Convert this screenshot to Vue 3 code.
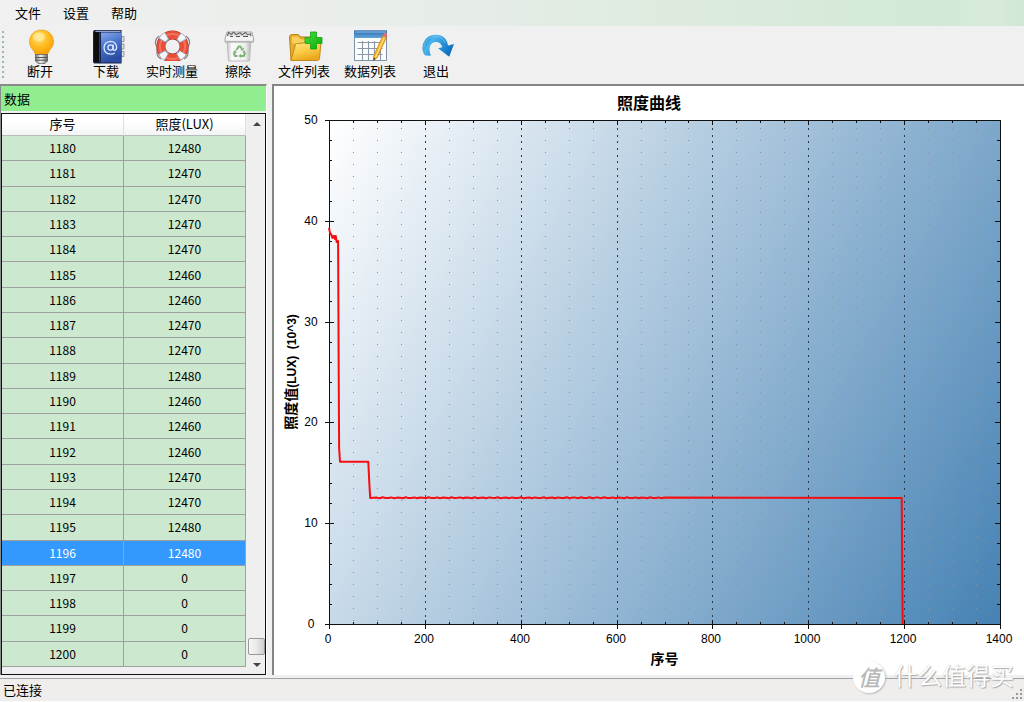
<script setup>
import { computed, onBeforeUnmount, onMounted, ref } from 'vue'

const menus = ['文件', '设置', '帮助']

const tools = [
  { id: 'bulb', label: '断开' },
  { id: 'book', label: '下载' },
  { id: 'ring', label: '实时测量' },
  { id: 'bin', label: '擦除' },
  { id: 'folder', label: '文件列表' },
  { id: 'sheet', label: '数据列表' },
  { id: 'exit', label: '退出' },
]

const lux = [
  12480, 12470, 12470, 12470, 12470, 12460, 12460, 12470, 12470, 12480, 12460,
  12460, 12460, 12470, 12470, 12480, 12480, 0, 0, 0, 0,
]
const rows = lux.map((value, i) => ({ no: 1180 + i, value }))
const selected = ref(1196)

/* chart geometry follows the size of its pane */
const pane = ref(null)
const width = ref(750)
const height = ref(589)
let observer

onMounted(() => {
  const measure = () => {
    width.value = Math.max(200, pane.value.clientWidth)
    height.value = Math.max(200, pane.value.clientHeight)
  }
  measure()
  observer = new ResizeObserver(measure)
  observer.observe(pane.value)
})
onBeforeUnmount(() => observer && observer.disconnect())

const X_MAX = 1400
const Y_MAX = 50
const left = 55
const top = 34
const right = computed(() => width.value - 24)
const bottom = computed(() => height.value - 51)
const plotW = computed(() => right.value - left)
const plotH = computed(() => bottom.value - top)

const px = (v) => left + (v / X_MAX) * plotW.value
const py = (v) => bottom.value - (v / Y_MAX) * plotH.value

const xTicks = computed(() =>
  Array.from({ length: 29 }, (_, i) => i * 50).map((v) => ({
    v,
    major: v % 200 === 0,
    pos: Math.round(px(v)),
  }))
)
const yTicks = computed(() =>
  Array.from({ length: 26 }, (_, i) => i * 2).map((v) => ({
    v,
    major: v % 10 === 0,
    pos: Math.round(py(v)),
  }))
)
const inner = computed(() => xTicks.value.filter((t) => t.v > 0 && t.v < X_MAX))

const shade = computed(() => {
  const gx = 0.7 / plotW.value
  const gy = 0.3 / plotH.value
  const n = gx * gx + gy * gy
  return { x: left + gx / n, y: top + gy / n }
})

const series = [
  [0, 39.3], [2, 38.8], [5, 38.6], [7, 38.3], [10, 38.5], [12, 38.2],
  [14, 38.5], [16, 37.9], [19, 38], [20, 27], [21, 17.5], [23, 16.1],
  [82, 16.1], [84, 14], [86, 12.5],
]
for (let v = 100; v <= 700; v += 6) {
  series.push([v, 12.52 + 0.05 * Math.sin(v * 1.7)])
}
series.push([1195, 12.5], [1196, 6], [1197, 0])
const line = computed(() =>
  series.map(([a, b]) => `${px(a).toFixed(1)},${py(b).toFixed(1)}`).join(' ')
)
</script>

<template>
  <div class="window">
    <nav class="menu">
      <button v-for="m in menus" :key="m" type="button">{{ m }}</button>
    </nav>

    <div class="toolbar">
      <span class="grip"></span>
      <button v-for="t in tools" :key="t.id" type="button" class="tool">
        <svg v-if="t.id === 'bulb'" viewBox="0 0 34 34" aria-hidden="true">
          <defs>
            <radialGradient id="bulbFill" cx=".4" cy=".3" r=".75">
              <stop offset="0" stop-color="#ffe27a" />
              <stop offset=".5" stop-color="#ffbd22" />
              <stop offset="1" stop-color="#f79a00" />
            </radialGradient>
            <linearGradient id="capFill">
              <stop offset="0" stop-color="#777" />
              <stop offset=".45" stop-color="#f4f4f4" />
              <stop offset="1" stop-color="#666" />
            </linearGradient>
          </defs>
          <path d="M18.500 0C11 0 6.500 5.500 6.500 11.800c0 4.600 2.600 6.700 4.200 9.200 1 1.600 1.300 3 2 3.800h11.500c.8-1 1-2.300 2-3.900 1.600-2.500 4.300-4.500 4.300-9.100C30.500 5.500 26 0 18.500 0z" fill="url(#bulbFill)" stroke="#ee9a10" stroke-width=".7" />
          <ellipse cx="16" cy="7" rx="6" ry="4.500" fill="#fff3b8" opacity=".55" />
          <path d="M12.500 24.500h12v6.500l-2.500 2.500h-7l-2.500-2.500z" fill="url(#capFill)" stroke="#555" stroke-width=".7" />
          <path d="M12.500 27.500h12M12.500 30.200h12" stroke="#555" stroke-width="1" />
        </svg>

        <svg v-else-if="t.id === 'book'" viewBox="0 0 34 34" aria-hidden="true">
          <defs>
            <linearGradient id="bookFill" x2=".3" y2="1">
              <stop offset="0" stop-color="#86a9e8" />
              <stop offset=".45" stop-color="#4a76cc" />
              <stop offset="1" stop-color="#2a4ca2" />
            </linearGradient>
          </defs>
          <path d="M32 6.500h3v5h-3zM32 14h3v5h-3zM32 21.500h3v5h-3z" fill="#ddd" stroke="#888" stroke-width=".8" />
          <path d="M5.500 0h27v33.500h-27q-1.500 0-1.500-2v-29Q4 0 5.500 0z" fill="#16244a" />
          <path d="M12 2.500h20.500v30H12z" fill="url(#bookFill)" />
          <path d="M5 1.500l6 1.500v29.500l-6-1z" fill="#0b0c12" />
          <path d="M10.500 3v29" stroke="#3d414d" stroke-width="1" />
          <path d="M6.500 1.300h25" stroke="#b4c2e2" stroke-width="1" />
          <circle cx="21.500" cy="17.500" r="2.600" fill="none" stroke="#dce8ff" stroke-width="1.300" />
          <path d="M24.200 14.600v4.400q.3 1.800 1.700 1.300 2-1 1.700-3.800-.9-5-6.100-5.200-6.200.5-6.500 6.400.3 6 6.500 6.400 2.700 0 4.200-1.200" fill="none" stroke="#dce8ff" stroke-width="1.300" />
        </svg>

        <svg v-else-if="t.id === 'ring'" viewBox="0 0 34 34" aria-hidden="true">
          <path d="M4 6Q-1 10 1 15q2 2 1 5-1 6 4 9M31 6q5 4 3 9-2 2-1 5 1 6-4 9" fill="none" stroke="#7b8792" stroke-width="1.200" />
          <clipPath id="ringClip"><path d="M0 0h34v31H0z" /></clipPath>
          <g clip-path="url(#ringClip)">
            <circle cx="17.500" cy="16.500" r="11.600" fill="none" stroke="#b33423" stroke-width="9" />
            <circle cx="17.500" cy="16.500" r="11.600" fill="none" stroke="#e8503a" stroke-width="7.800" />
            <circle cx="17.500" cy="16.500" r="12.600" fill="none" stroke="#ff8a70" stroke-width="2" opacity=".6" />
            <circle cx="17.500" cy="16.500" r="11.600" fill="none" stroke="#8db6dc" stroke-width="8.200" stroke-dasharray="6.400 11.820" stroke-dashoffset="-5.900" />
            <circle cx="17.500" cy="16.500" r="12.300" fill="none" stroke="#f4f8fc" stroke-width="6.800" stroke-dasharray="5.400 13.920" stroke-dashoffset="-6.900" />
          </g>
        </svg>

        <svg v-else-if="t.id === 'bin'" viewBox="0 0 34 34" aria-hidden="true">
          <defs>
            <linearGradient id="binFill">
              <stop offset="0" stop-color="#c4c4c4" />
              <stop offset=".2" stop-color="#fafafa" />
              <stop offset=".75" stop-color="#efefef" />
              <stop offset="1" stop-color="#b5b5b5" />
            </linearGradient>
          </defs>
          <path d="M6 11h24l-1.500 20h-21z" fill="url(#binFill)" stroke="#bdbdbd" />
          <path d="M6 2h25l1.500 7v3H4V9z" fill="#f4f4f4" stroke="#a5a5a5" />
          <path d="M6.500 6l1-3.500 3 2 2-2.500 2.500 2.500 4-1.800 2 2 3.500-2.200 2 2.200 3-1 .5 2.500" fill="#ddd" stroke="#666" stroke-width="1.100" />
          <path d="M9 6.500h3m3 0h4m3 0h5" stroke="#555" stroke-width="1.100" />
          <path d="M4.500 11.500h28" stroke="#b5b5b5" stroke-width="1.300" />
          <g fill="none" stroke="#7fb277" stroke-width="2">
            <path d="M15.400 20l2.400-3.500h1.500l1.600 2.500" />
            <path d="M22.600 21l1.300 2.700-1.200 2.200h-3.400" />
            <path d="M16.500 26h-2.400L13 23.700l1.200-2.200" />
          </g>
          <path d="M22.700 17.200v3.400h-3.400zM20 23.700v4.400l-2.500-2.200zM11.900 21.300l3.100-1.100.6 3.200z" fill="#7fb277" />
        </svg>

        <svg v-else-if="t.id === 'folder'" viewBox="0 0 34 34" aria-hidden="true">
          <defs>
            <linearGradient id="folderFill" x2=".4" y2="1">
              <stop offset="0" stop-color="#ffe98a" />
              <stop offset=".6" stop-color="#fbcb45" />
              <stop offset="1" stop-color="#eba81e" />
            </linearGradient>
            <linearGradient id="plusFill" x2="1" y2="1">
              <stop offset="0" stop-color="#46e03a" />
              <stop offset="1" stop-color="#0aa80d" />
            </linearGradient>
          </defs>
          <path d="M4 30.500L2.500 7Q2.500 4.500 5 4.500h6l3 2.500h16v5l-2 18.500z" fill="#e8ab2a" stroke="#bd831c" />
          <path d="M5 6.500h6l3 3h14v4H5z" fill="#f7cf5c" />
          <path d="M4 30.500l4.500-16q.5-1 2-1l6-.5 2-2H33q1.300 0 1 1.500l-1.500 16q-.5 2-2 2z" fill="url(#folderFill)" stroke="#c08a1d" />
          <path d="M23.500 2h6v5.500H35v6h-5.500V19h-6v-5.500H18v-6h5.500z" fill="url(#plusFill)" stroke="#14a314" stroke-width=".8" />
        </svg>

        <svg v-else-if="t.id === 'sheet'" viewBox="0 0 34 34" aria-hidden="true">
          <defs>
            <linearGradient id="barFill" x2="0" y2="1">
              <stop offset="0" stop-color="#2d69a8" />
              <stop offset="1" stop-color="#5fa5dd" />
            </linearGradient>
          </defs>
          <path d="M1.500 1h32v29.500h-32z" fill="#fdfdfd" stroke="#7b91a8" />
          <path d="M1 .5h33v7.500H1z" fill="url(#barFill)" />
          <path d="M2 2h31" stroke="#8cc0ea" stroke-width="1" />
          <path d="M4.500 12.500h25M4.500 18.500h25M4.500 24.500h25M9.500 11v19M15.500 11v19M21.500 11v19M27.500 11v19" stroke="#8b98a6" stroke-width="1.100" />
          <path d="M20.300 30.500l.4-4.400L30.200 5l3.600 1.700-9.600 21z" fill="#fbb92a" stroke="#b97b17" stroke-width=".7" />
          <path d="M22.600 27L32 6" stroke="#ffe48b" stroke-width="1" />
          <path d="M29.500 6.500l1.300-3q1.700-1.700 3.200.4l-.7 4z" fill="#e86a6a" />
          <path d="M20.300 31l.5-3.500 1.900 1.200z" fill="#55442d" />
        </svg>

        <svg v-else viewBox="0 0 34 34" aria-hidden="true">
          <defs>
            <linearGradient id="exitFill" x2="1" y2=".5">
              <stop offset="0" stop-color="#1b78bd" />
              <stop offset=".35" stop-color="#4ab5ee" />
              <stop offset="1" stop-color="#0f71c0" />
            </linearGradient>
          </defs>
          <path d="M6.500 25.500C1 22 2.500 4.800 17 4.800c7 0 11 4.200 12 10.700l6-1.500-4.800 12.700L19 18.300l4.300-1.100C22.300 13.800 20 12 17 12c-5.500 0-8.500 6-5 13.800z" fill="url(#exitFill)" />
          <path d="M4.800 17C6 9.500 11 6.300 16.500 6.300q7 .2 10 6.500" fill="none" stroke="#8bd5fa" stroke-width="1" opacity=".6" />
        </svg>
        <span>{{ t.label }}</span>
      </button>
    </div>

    <main class="body">
      <section class="data">
        <h2>数据</h2>
        <div class="grid">
          <div class="records">
            <table>
              <thead>
                <tr><th scope="col">序号</th><th scope="col">照度(LUX)</th></tr>
              </thead>
              <tbody>
                <tr
                  v-for="r in rows"
                  :key="r.no"
                  :class="{ on: r.no === selected }"
                  @click="selected = r.no"
                >
                  <td>{{ r.no }}</td>
                  <td>{{ r.value }}</td>
                </tr>
              </tbody>
            </table>
          </div>
          <div class="scroll">
            <button type="button" aria-label="向上滚动">
              <svg viewBox="0 0 8 4" aria-hidden="true"><path d="M0 4l4-4 4 4z" /></svg>
            </button>
            <span class="thumb"></span>
            <button type="button" aria-label="向下滚动">
              <svg viewBox="0 0 8 4" aria-hidden="true"><path d="M0 0l4 4 4-4z" /></svg>
            </button>
          </div>
        </div>
      </section>

      <section ref="pane" class="chart">
        <svg :viewBox="`0 0 ${width} ${height}`" role="img" aria-label="照度曲线">
          <defs>
            <linearGradient
              id="plotFill"
              gradientUnits="userSpaceOnUse"
              :x1="left"
              :y1="top"
              :x2="shade.x"
              :y2="shade.y"
            >
              <stop offset="0" stop-color="#ffffff" />
              <stop offset="1" stop-color="#4682b4" />
            </linearGradient>
          </defs>
          <text class="title" :x="width / 2" y="23">照度曲线</text>
          <rect :x="left" :y="top" :width="plotW" :height="plotH" fill="url(#plotFill)" />

          <g class="crisp">
            <line
              v-for="t in inner"
              :key="'g' + t.v"
              :class="t.major ? 'major' : 'minor'"
              :x1="t.pos"
              :x2="t.pos"
              :y1="top + 8"
              :y2="bottom"
            />
            <template v-for="t in xTicks" :key="'x' + t.v">
              <line class="axis" :x1="t.pos" :x2="t.pos" :y1="top" :y2="top + (t.major ? 5 : 3)" />
              <line
                class="axis"
                :x1="t.pos"
                :x2="t.pos"
                :y1="bottom - (t.major ? 4 : 2)"
                :y2="bottom + (t.major ? 5 : 0)"
              />
            </template>
            <template v-for="t in yTicks" :key="'y' + t.v">
              <line
                class="axis"
                :y1="t.pos"
                :y2="t.pos"
                :x1="left - (t.major ? 4 : 0)"
                :x2="left + (t.major ? 5 : 3)"
              />
              <line class="axis" :y1="t.pos" :y2="t.pos" :x1="right - (t.major ? 5 : 3)" :x2="right" />
            </template>
            <rect class="frame" :x="left" :y="top" :width="plotW" :height="plotH" />
          </g>

          <polyline class="curve" :points="line" />

          <template v-for="t in xTicks" :key="'lx' + t.v">
            <text v-if="t.major" class="num" :x="t.pos - 1" :y="bottom + 19">{{ t.v }}</text>
          </template>
          <template v-for="t in yTicks" :key="'ly' + t.v">
            <text v-if="t.major" class="num" :x="left - 18" :y="t.pos + 4">{{ t.v }}</text>
          </template>

          <text class="name" :x="left + plotW / 2" :y="bottom + 40">序号</text>
          <text
            class="name"
            :transform="`translate(22 ${top + plotH / 2}) rotate(-90)`"
          >照度值<tspan class="unit">(LUX)&#160; (10^3)</tspan></text>
        </svg>
      </section>
    </main>

    <footer class="status">
      <span>已连接</span>
      <svg viewBox="0 0 12 12" aria-hidden="true">
        <path d="M8 0h2v2H8zM4 4h2v2H4zM8 4h2v2H8zM0 8h2v2H0zM4 8h2v2H4zM8 8h2v2H8z" fill="#9a9a9a" />
      </svg>
    </footer>

    <div class="mark"><b>值</b><span>什么值得买</span></div>
  </div>
</template>

<style>
body {
  margin: 0;
  background: #f0f0f0;
}
</style>

<style scoped>
.window {
  position: relative;
  display: flex;
  flex-direction: column;
  box-sizing: border-box;
  height: 100vh;
  min-height: 480px;
  overflow: hidden;
  background: #f0f0f0;
  color: #000;
  font: 13px/16px "Noto Sans CJK SC", sans-serif;
}
button {
  margin: 0;
  padding: 0;
  border: 0;
  background: none;
  color: inherit;
  font: inherit;
}
.menu {
  display: flex;
  align-items: center;
  gap: 22px;
  height: 26px;
  padding-left: 15px;
  background: linear-gradient(90deg, #f0f0f0 0%, #e6ede7 45%, #d2e9d5 92%, #d8ebda 97%, #cfe8d2 100%);
}
.toolbar {
  display: flex;
  height: 58px;
}
.grip {
  width: 2px;
  margin: 5px 3px 5px 2px;
  background: repeating-linear-gradient(#9dbba2 0 2px, transparent 2px 5px);
}
.tool {
  display: flex;
  flex-direction: column;
  align-items: center;
  width: 66px;
  padding-top: 4px;
}
.tool svg {
  width: 34px;
  height: 34px;
  overflow: visible;
}
.tool span {
  line-height: 14px;
  white-space: nowrap;
}
.body {
  display: flex;
  flex: 1;
  gap: 5px;
  min-height: 0;
}
.data {
  display: flex;
  flex-direction: column;
  flex: none;
  box-sizing: border-box;
  width: 267px;
  border-top: 2px solid #8a8a8a;
  border-left: 1px solid #8a8a8a;
  border-right: 1px solid #fff;
}
.data h2 {
  margin: 0 0 2px;
  padding-left: 3px;
  background: #90ee90;
  font-size: 13px;
  font-weight: 400;
  line-height: 25px;
}
.grid {
  display: flex;
  flex: 1;
  min-height: 0;
  border: 1px solid #111;
  background: #f0f0f0;
}
.records {
  flex: 1;
  padding-bottom: 7px;
}
table {
  width: 100%;
  height: 100%;
  border-spacing: 0;
  table-layout: fixed;
  font-size: 12px;
  line-height: 16px;
  text-align: center;
}
th {
  box-sizing: border-box;
  height: 22px;
  padding: 0 0 2px;
  border-right: 1px solid #dcdfe3;
  border-bottom: 1px solid #b5bdb6;
  background: linear-gradient(#fff 40%, #f3f4f6);
  font-size: 13px;
  font-weight: 400;
}
td {
  padding: 0;
  border-right: 1px solid #a0a0a0;
  border-bottom: 1px solid #a0a0a0;
  background: #cce8cf;
}
.on td {
  background: #3399ff;
  color: #fff;
}
.scroll {
  display: flex;
  flex-direction: column;
  width: 17px;
  margin-left: 2px;
  background: #efefef;
}
.scroll button {
  display: flex;
  align-items: center;
  justify-content: center;
  height: 19px;
}
.scroll button svg {
  width: 8px;
  height: 4px;
  fill: #444;
}
.thumb {
  box-sizing: border-box;
  height: 17px;
  margin-top: auto;
  border: 1px solid #999;
  border-radius: 2px;
  background: linear-gradient(90deg, #f6f6f6, #e9e9e9 50%, #cfcfd1);
}
.chart {
  flex: 1;
  min-width: 0;
  border-top: 2px solid #858585;
  border-left: 2px solid #858585;
  background: #fff;
}
.chart svg {
  display: block;
  width: 100%;
  height: 100%;
}
.chart text {
  text-anchor: middle;
}
.title {
  font-size: 16px;
  font-weight: 700;
}
.name {
  font-size: 14px;
  font-weight: 700;
}
.unit {
  font-family: "Liberation Sans", sans-serif;
  font-size: 12px;
}
.num {
  font-family: "Liberation Sans", sans-serif;
  font-size: 12px;
}
.crisp {
  shape-rendering: crispEdges;
}
.axis {
  stroke: #111;
}
.frame {
  fill: none;
  stroke: #111;
}
.major {
  stroke: #2b3a46;
  stroke-dasharray: 2 5 2 4 2 5;
}
.minor {
  stroke: #8b9299;
  stroke-dasharray: 1 11;
}
.curve {
  fill: none;
  stroke: #f60d12;
  stroke-width: 2;
  stroke-linejoin: round;
}
.status {
  display: flex;
  align-items: flex-start;
  justify-content: space-between;
  box-sizing: border-box;
  height: 24px;
  margin-top: 3px;
  padding: 3px 0 0 3px;
  border-top: 1px solid #a0a4a4;
  border-bottom: 1px solid #fafafa;
  background: #f0eded;
}
.status svg {
  align-self: flex-end;
  width: 12px;
  height: 12px;
}
.mark {
  position: absolute;
  right: 10px;
  bottom: 9px;
  display: flex;
  align-items: center;
  gap: 9px;
  color: #fff;
  font-size: 24px;
  line-height: 32px;
  text-shadow: 1px 1px 1px #aaa, 0 0 1px #bbb;
  pointer-events: none;
}
.mark span {
  padding-bottom: 4px;
  line-height: 28px;
}
.mark b {
  width: 32px;
  height: 32px;
  border-radius: 50%;
  background: #fff;
  box-shadow: 1px 1px 2px #bbb;
  color: #b8b8b8;
  font-size: 22px;
  font-style: italic;
  font-weight: 500;
  line-height: 30px;
  text-align: center;
  text-shadow: none;
}
</style>
